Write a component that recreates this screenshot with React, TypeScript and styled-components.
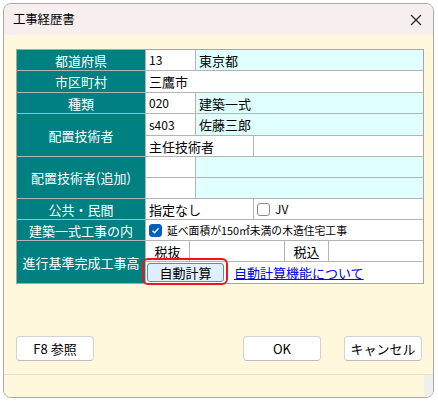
import React from "react";
import styled, { createGlobalStyle } from "styled-components";

const Global = createGlobalStyle`
  html, body { margin: 0; padding: 0; background: #ffffff; }
  body { font-family: "Noto Sans CJK JP", "Noto Sans", sans-serif; color: #000; }
`;

const Window = styled.div`
  margin: 3px 0 0 3px;
  width: 431px;
  height: 395px;
  box-sizing: border-box;
  border: 1px solid #a8a8a8;
  border-radius: 8px;
  overflow: hidden;
  background: #fff8dc;
  display: flex;
  flex-direction: column;
`;

const TitleBar = styled.div`
  height: 31px;
  flex: none;
  background: #f7eeee;
  display: flex;
  align-items: center;
  justify-content: space-between;
  padding: 0 7px 0 9px;
`;

const Title = styled.span`
  font-size: 12.5px;
  line-height: 1;
  letter-spacing: -0.2px;
`;

const CloseIcon = styled.svg`
  width: 12px;
  height: 12px;
  margin-right: 4px;
`;

const Content = styled.div`
  flex: 1;
  display: flex;
  flex-direction: column;
  padding: 14px 11px 13px 12px;
`;

const Table = styled.div`
  width: 408px;
  box-sizing: border-box;
  display: grid;
  grid-template-columns: 128px 43px 5px 57px 30px 43px 94px;
  grid-template-rows: 20px 21px 20px 21px 20px 20px 20px 20px 20px 20px 21px;
  gap: 1px;
  background: #b4b4b4;
  border: 1px solid #a6a6a6;
  position: relative;
`;

type CellProps = { $c: string; $r?: string; $bg?: string; $center?: boolean; $small?: boolean };

const Cell = styled.div<CellProps>`
  grid-column: ${(p) => p.$c};
  grid-row: ${(p) => p.$r ?? "auto"};
  background: ${(p) => p.$bg ?? "#ffffff"};
  display: flex;
  align-items: center;
  justify-content: ${(p) => (p.$center ? "center" : "flex-start")};
  padding: 0 3px;
  font-size: ${(p) => (p.$small ? "12px" : "13px")};
  line-height: 1;
  white-space: nowrap;
  overflow: visible;
  position: relative;
`;

const Label = styled.div<{ $r: string }>`
  grid-column: 1;
  grid-row: ${(p) => p.$r};
  background: #008080;
  color: #ffffff;
  display: flex;
  align-items: center;
  justify-content: center;
  font-size: 13px;
  line-height: 1;
  white-space: nowrap;
`;

const CheckBox = styled.span<{ $checked?: boolean }>`
  width: 13px;
  height: 13px;
  box-sizing: border-box;
  border-radius: 3px;
  border: 1px solid ${(p) => (p.$checked ? "#005fb8" : "#8a8a8a")};
  background: ${(p) => (p.$checked ? "#005fb8" : "#ffffff")};
  display: inline-flex;
  align-items: center;
  justify-content: center;
  flex: none;
`;

const CheckText = styled.span<{ $size?: number }>`
  margin-left: 5px;
  font-size: ${(p) => p.$size ?? 13}px;
`;

const CalcButton = styled.button`
  width: 77px;
  height: 19px;
  margin-left: -2px;
  box-sizing: border-box;
  border: 1px solid #4f8fd0;
  border-radius: 3px;
  background: #e1eefb;
  font-family: inherit;
  font-size: 13px;
  line-height: 1;
  padding: 0;
  color: #000;
`;

const Highlight = styled.div`
  position: absolute;
  left: -4px;
  top: -4px;
  width: 86px;
  height: 27px;
  box-sizing: border-box;
  border: 2px solid #e81818;
  border-radius: 6px;
  pointer-events: none;
`;

const HelpLink = styled.a`
  margin-left: 10px;
  color: #0000ee;
  text-decoration: underline;
  font-size: 13px;
  cursor: pointer;
`;

const ButtonRow = styled.div`
  margin-top: auto;
  display: flex;
  gap: 23px;
`;

const DialogButton = styled.button<{ $push?: boolean }>`
  width: 78px;
  height: 25px;
  margin-left: ${(p) => (p.$push ? "auto" : "0")};
  box-sizing: border-box;
  background: #ffffff;
  border: 1px solid #d2d2d2;
  border-bottom-color: #bcbcbc;
  border-radius: 4px;
  font-family: inherit;
  font-size: 13px;
  line-height: 1;
  padding: 0;
  color: #000;
`;

const StatusBar = styled.div`
  height: 22px;
  flex: none;
  border-top: 1px solid #e4e0d4;
  background: #fff8dc;
  display: flex;
  justify-content: flex-end;
`;

const Grip = styled.div`
  width: 9px;
  background: #f0efec;
`;

const cyan = "#e0ffff";

export default function App() {
  return (
    <>
      <Global />
      <Window>
        <TitleBar>
          <Title>工事経歴書</Title>
          <CloseIcon viewBox="0 0 12 12">
            <path d="M1 1 L11 11 M11 1 L1 11" stroke="#222" strokeWidth="1.1" fill="none" />
          </CloseIcon>
        </TitleBar>
        <Content>
          <Table>
            <Label $r="1">都道府県</Label>
            <Cell $c="2 / 4" $r="1" $small>13</Cell>
            <Cell $c="4 / 8" $r="1" $bg={cyan}>東京都</Cell>

            <Label $r="2">市区町村</Label>
            <Cell $c="2 / 8" $r="2">三鷹市</Cell>

            <Label $r="3">種類</Label>
            <Cell $c="2 / 4" $r="3" $small>020</Cell>
            <Cell $c="4 / 8" $r="3" $bg={cyan}>建築一式</Cell>

            <Label $r="4 / 6">配置技術者</Label>
            <Cell $c="2 / 4" $r="4" $small>s403</Cell>
            <Cell $c="4 / 8" $r="4" $bg={cyan}>佐藤三郎</Cell>
            <Cell $c="2 / 5" $r="5">主任技術者</Cell>
            <Cell $c="5 / 8" $r="5"></Cell>

            <Label $r="6 / 8">配置技術者(追加)</Label>
            <Cell $c="2 / 4" $r="6"></Cell>
            <Cell $c="4 / 8" $r="6" $bg={cyan}></Cell>
            <Cell $c="2 / 4" $r="7"></Cell>
            <Cell $c="4 / 8" $r="7" $bg={cyan}></Cell>

            <Label $r="8">公共・民間</Label>
            <Cell $c="2 / 5" $r="8">指定なし</Cell>
            <Cell $c="5 / 8" $r="8">
              <CheckBox />
              <CheckText $size={12}>JV</CheckText>
            </Cell>

            <Label $r="9">建築一式工事の内</Label>
            <Cell $c="2 / 8" $r="9">
              <CheckBox $checked>
                <svg width="9" height="9" viewBox="0 0 9 9">
                  <path d="M1.5 4.8 L3.6 6.8 L7.6 2.2" stroke="#fff" strokeWidth="1.3" fill="none" />
                </svg>
              </CheckBox>
              <CheckText $size={10.8}>延べ面積が150㎡未満の木造住宅工事</CheckText>
            </Cell>

            <Label $r="10 / 12">進行基準完成工事高</Label>
            <Cell $c="2" $r="10" $center>税抜</Cell>
            <Cell $c="3 / 6" $r="10"></Cell>
            <Cell $c="6" $r="10" $center>税込</Cell>
            <Cell $c="7" $r="10"></Cell>
            <Cell $c="2 / 8" $r="11">
              <CalcButton>自動計算</CalcButton>
              <Highlight />
              <HelpLink>自動計算機能について</HelpLink>
            </Cell>
          </Table>
          <ButtonRow>
            <DialogButton>F8 参照</DialogButton>
            <DialogButton $push>OK</DialogButton>
            <DialogButton>キャンセル</DialogButton>
          </ButtonRow>
        </Content>
        <StatusBar>
          <Grip />
        </StatusBar>
      </Window>
    </>
  );
}
